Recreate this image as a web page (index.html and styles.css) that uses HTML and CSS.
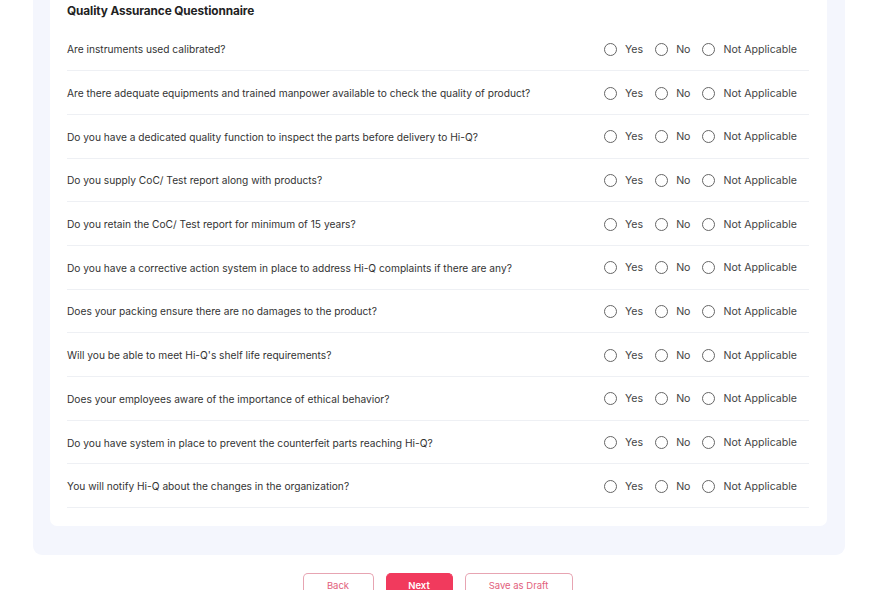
FILE: index.html
```html
<!DOCTYPE html>
<html>
<head>
<meta charset="utf-8">
<link rel="stylesheet" href="styles.css">
</head>
<body>
<div class="panel">
  <div class="card">
    <h2 class="title">Quality Assurance Questionnaire</h2>
    <div class="rows" id="rows">
      <div class="row"><span class="q">Are instruments used calibrated?</span><div class="opts"><label class="opt"><span class="radio"></span>Yes</label><label class="opt"><span class="radio"></span>No</label><label class="opt"><span class="radio"></span>Not Applicable</label></div></div>
      <div class="row"><span class="q">Are there adequate equipments and trained manpower available to check the quality of product?</span><div class="opts"><label class="opt"><span class="radio"></span>Yes</label><label class="opt"><span class="radio"></span>No</label><label class="opt"><span class="radio"></span>Not Applicable</label></div></div>
      <div class="row"><span class="q">Do you have a dedicated quality function to inspect the parts before delivery to Hi-Q?</span><div class="opts"><label class="opt"><span class="radio"></span>Yes</label><label class="opt"><span class="radio"></span>No</label><label class="opt"><span class="radio"></span>Not Applicable</label></div></div>
      <div class="row"><span class="q">Do you supply CoC/ Test report along with products?</span><div class="opts"><label class="opt"><span class="radio"></span>Yes</label><label class="opt"><span class="radio"></span>No</label><label class="opt"><span class="radio"></span>Not Applicable</label></div></div>
      <div class="row"><span class="q">Do you retain the CoC/ Test report for minimum of 15 years?</span><div class="opts"><label class="opt"><span class="radio"></span>Yes</label><label class="opt"><span class="radio"></span>No</label><label class="opt"><span class="radio"></span>Not Applicable</label></div></div>
      <div class="row"><span class="q">Do you have a corrective action system in place to address Hi-Q complaints if there are any?</span><div class="opts"><label class="opt"><span class="radio"></span>Yes</label><label class="opt"><span class="radio"></span>No</label><label class="opt"><span class="radio"></span>Not Applicable</label></div></div>
      <div class="row"><span class="q">Does your packing ensure there are no damages to the product?</span><div class="opts"><label class="opt"><span class="radio"></span>Yes</label><label class="opt"><span class="radio"></span>No</label><label class="opt"><span class="radio"></span>Not Applicable</label></div></div>
      <div class="row"><span class="q">Will you be able to meet Hi-Q's shelf life requirements?</span><div class="opts"><label class="opt"><span class="radio"></span>Yes</label><label class="opt"><span class="radio"></span>No</label><label class="opt"><span class="radio"></span>Not Applicable</label></div></div>
      <div class="row"><span class="q">Does your employees aware of the importance of ethical behavior?</span><div class="opts"><label class="opt"><span class="radio"></span>Yes</label><label class="opt"><span class="radio"></span>No</label><label class="opt"><span class="radio"></span>Not Applicable</label></div></div>
      <div class="row"><span class="q">Do you have system in place to prevent the counterfeit parts reaching Hi-Q?</span><div class="opts"><label class="opt"><span class="radio"></span>Yes</label><label class="opt"><span class="radio"></span>No</label><label class="opt"><span class="radio"></span>Not Applicable</label></div></div>
      <div class="row"><span class="q">You will notify Hi-Q about the changes in the organization?</span><div class="opts"><label class="opt"><span class="radio"></span>Yes</label><label class="opt"><span class="radio"></span>No</label><label class="opt"><span class="radio"></span>Not Applicable</label></div></div>
    </div>
  </div>
</div>
<div class="actions">
  <button class="btn btn-outline btn-back">Back</button>
  <button class="btn btn-primary btn-next">Next</button>
  <button class="btn btn-outline btn-draft">Save as Draft</button>
</div>
</body>
</html>
```
FILE: styles.css
```css
html, body {
  margin: 0;
  padding: 0;
  background: #ffffff;
  font-family: "Inter", "Liberation Sans", sans-serif;
  color: #333;
}
.panel {
  margin-left: 33px;
  width: 812px;
  box-sizing: border-box;
  background: #f4f6fd;
  border-radius: 0 0 9px 9px;
  padding: 0 18px 29px 17px;
}
.card {
  background: #fff;
  border-radius: 0 0 7px 7px;
  padding: 0 18px 18px 17px;
}
.title {
  margin: 0;
  padding-top: 3px;
  height: 24.5px;
  font-size: 11.8px;
  line-height: 16px;
  font-weight: 700;
  color: #222;
  letter-spacing: -0.1px;
}
.row {
  display: flex;
  align-items: center;
  justify-content: space-between;
  height: 43.7px;
  box-sizing: border-box;
  border-bottom: 1px solid #eef0f4;
  padding-top: 1px;
}
.q {
  font-size: 10.2px;
  color: #333;
  letter-spacing: 0;
}
.opts {
  display: flex;
  align-items: center;
  gap: 12px;
  margin-right: 12px;
}
.opt {
  display: flex;
  align-items: center;
  gap: 8px;
  font-size: 10.6px;
  color: #444;
}
.radio {
  width: 11px;
  height: 11px;
  border: 1.2px solid #666;
  border-radius: 50%;
  box-sizing: content-box;
}
.actions {
  display: flex;
  justify-content: center;
  gap: 12px;
  margin-top: 18px;
}
.btn {
  height: 24px;
  border-radius: 5px 5px 0 0;
  font-family: inherit;
  font-size: 9.5px;
  padding: 0;
  box-sizing: border-box;
  line-height: 1;
}
.btn-outline {
  background: #fff;
  border: 1.2px solid #e7a4b2;
  border-bottom: none;
  color: #e2607c;
}
.btn-primary {
  background: #f13a5d;
  border: 1.2px solid #f13a5d;
  border-bottom: none;
  color: #fff;
  font-weight: 600;
}
.btn-back { width: 71px; }
.btn-next { width: 67px; }
.btn-draft { width: 108px; }
```
